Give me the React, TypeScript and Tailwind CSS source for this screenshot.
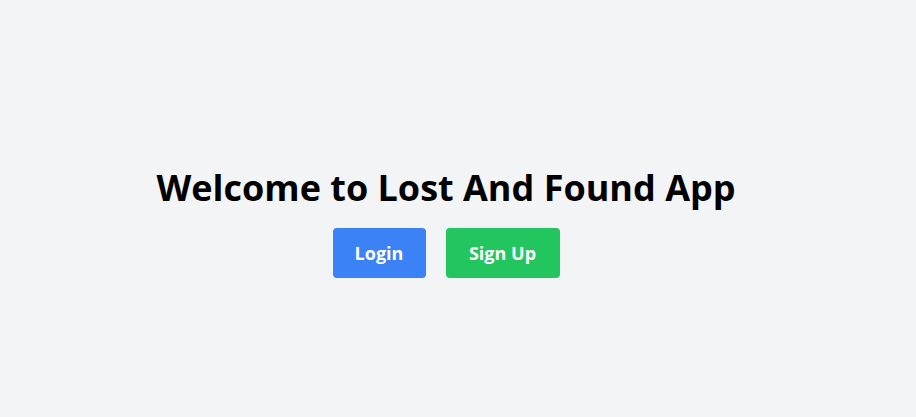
export default function App() {
    return (
        <div className="flex h-screen flex-col items-center justify-center bg-[#f3f4f6] pt-[28px] pr-[24px] font-['Open_Sans',sans-serif]">
            <h1 className="mb-5 text-4xl font-bold text-black">Welcome to Lost And Found App</h1>
            <div className="flex gap-5">
                <button className="h-[50px] w-[93px] rounded bg-[#3b82f6] pt-px text-lg font-bold text-white">Login</button>
                <button className="h-[50px] w-[114px] rounded bg-[#22c55e] pt-px text-lg font-bold text-white">Sign Up</button>
            </div>
        </div>
    );
}
